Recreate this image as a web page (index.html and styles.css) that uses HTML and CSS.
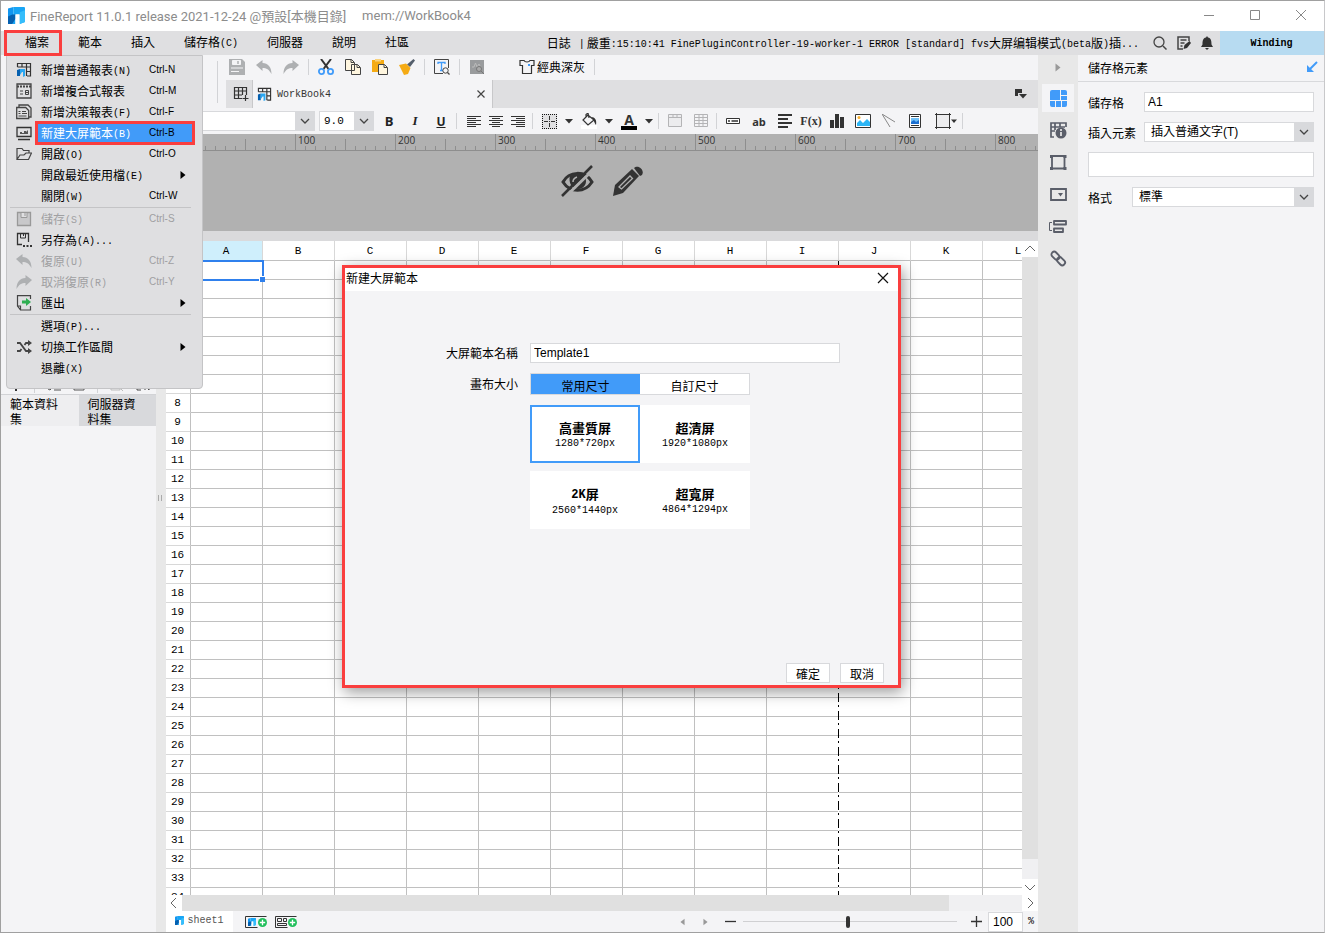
FILE: index.html
```html
<!DOCTYPE html>
<html lang="zh-Hant">
<head>
    <title>FineReport</title>
    <meta charset="UTF-8">
    <meta name="viewport" content="width=device-width, initial-scale=1.0">
    <link rel="stylesheet" href="styles.css">
</head>
<body>
    <!-- shared icons -->
    <svg class="defs">
        <symbol id="i-down" viewBox="0 0 10 10"><path d="M1 3l4 4 4-4" fill="none" stroke="#444" stroke-width="1.3"/></symbol>
        <symbol id="i-caret" viewBox="0 0 8 8"><path d="M0 2h8L4 6.500z" fill="#333"/></symbol>
        <symbol id="i-logo" viewBox="0 0 16 16"><path d="M0 1.500l5-1.500v8l-1 1v7H0z" fill="#1296f0"/><path d="M5 0h10a1 1 0 0 1 1 1v13l-5 2V7H7v9H4V8l1-1z" fill="#18a5f5"/><path d="M0 9l4-2h3v4l-3 5H0z" fill="#0560b0"/><path d="M7 7h4v9H7z" fill="#fff"/><path d="M11 5l5-2v11l-5 2z" fill="#35bdfb"/></symbol>
        <symbol id="i-book" viewBox="0 0 16 16"><path d="M1.500 5V1.500h13v12.500H11M6 5V1.500M10.500 1.500V14M1.500 5h13M10.500 9.500h4" fill="none" stroke="#333" stroke-width="1.200"/><path d="M1 8l3-1v7H1z" fill="#0560b0"/><path d="M4 7h5v7l-2 1v-5H6l-2 3z" fill="#2aa7f2"/></symbol>
        <symbol id="i-undo" viewBox="0 0 16 16"><path d="M0 6l6.500-5v3C12 4 15.500 8 15.500 15 13 10.500 10.500 9 6.500 9v3z" fill="#aeb0b2"/></symbol>
        <symbol id="i-redo" viewBox="0 0 16 16"><path d="M16 6L9.500 1v3C4 4 .5 8 .5 15 3 10.500 5.500 9 9.500 9v3z" fill="#aeb0b2"/></symbol>
        <symbol id="i-save" viewBox="0 0 16 16"><path d="M0 0h13l3 3v13H0z" fill="#aeb0b2"/><path d="M3.500 1.500h8v4h-8zM2 9h12M2 12.500h8" fill="#f4f4f6" stroke="#f4f4f6"/><path d="M9 2v3" stroke="#aeb0b2" stroke-width="1.500"/></symbol>
        <symbol id="i-right" viewBox="0 0 6 8"><path d="M.5 0l5 4-5 4z" fill="currentColor"/></symbol>
        <symbol id="i-plus" viewBox="0 0 10 10"><circle cx="5" cy="5" r="5" fill="#20bf5b"/><path d="M5 2v6M2 5h6" stroke="#fff" stroke-width="1.500"/></symbol>
    </svg>

    <div class="window">
        <header class="titlebar">
            <svg width="17" height="17"><use href="#i-logo"/></svg>
            <span>FineReport 11.0.1 release 2021-12-24 @預設[本機目錄]</span>
            <span class="path">mem://WorkBook4</span>
            <div class="win-buttons">
                <button aria-label="Minimize"><svg width="12" height="12"><path d="M1 6.500h10" stroke="#888"/></svg></button>
                <button aria-label="Maximize"><svg width="12" height="12"><path d="M1.500 1.500h9v9h-9z" fill="none" stroke="#888"/></svg></button>
                <button aria-label="Close"><svg width="12" height="12"><path d="M1 1l10 10M11 1L1 11" stroke="#888"/></svg></button>
            </div>
        </header>

        <nav class="menubar">
            <button class="marked">檔案</button>
            <button>範本</button>
            <button>插入</button>
            <button><span>儲存格<span class="lat">(C)</span></span></button>
            <button>伺服器</button>
            <button>說明</button>
            <button>社區</button>
            <div class="log">日誌<span class="lat bar">|</span>嚴重<span class="lat">:15:10:41 FinePluginController-19-worker-1 ERROR [standard] fvs</span>大屏编辑模式<span class="lat">(beta</span>版<span class="lat">)</span>插<span class="lat">...</span></div>
            <div class="menubar-icons">
                <svg width="14" height="14"><path d="M10 10l3.500 3.500" stroke="#444" stroke-width="1.500"/><circle cx="6" cy="6" r="5" fill="none" stroke="#444" stroke-width="1.300"/></svg>
                <svg width="14" height="14"><path d="M12 5V1H1v12h5M3.500 4h6M3.500 7h4M3.500 10h2" fill="none" stroke="#444" stroke-width="1.500"/><path d="M6.500 13l1-4 5-4 1.500 2-4 5z" fill="#333"/></svg>
                <svg width="12" height="14"><path d="M6 0l1 1.500c3 .8 3.500 3 3.500 7L12 11H0l1.500-2.500c0-4 .5-6.200 3.500-7zM4 12h4l-2 2z" fill="#333"/></svg>
            </div>
            <button class="user lat">Winding</button>
        </nav>

        <div class="main">
            <div class="editor">
                <div class="top">
                    <div class="top-left"></div>
                    <div class="top-right">
                        <div class="toolbar">
                            <button aria-label="Save"><svg width="16" height="16"><use href="#i-save"/></svg></button>
                            <button aria-label="Undo"><svg width="16" height="16"><use href="#i-undo"/></svg></button>
                            <button aria-label="Redo"><svg width="16" height="16"><use href="#i-redo"/></svg></button>
                            <i class="sep"></i>
                            <button aria-label="Cut"><svg width="16" height="16"><path d="M3 0l7.500 10M13 0L5.500 10" stroke="#333" stroke-width="2"/><circle cx="3.500" cy="12.500" r="2.600" fill="none" stroke="#419bf9" stroke-width="1.800"/><circle cx="12.500" cy="12.500" r="2.600" fill="none" stroke="#419bf9" stroke-width="1.800"/></svg></button>
                            <button aria-label="Copy"><svg width="16" height="16"><path d="M.5.5h6l3 3v8h-9zM6.500 5.500h6l3 3v7h-9z" fill="#fff6df" stroke="#444"/><path d="M6 .5v3h3M12 5.500v3h3" fill="none" stroke="#444"/></svg></button>
                            <button aria-label="Paste"><svg width="16" height="16"><path d="M0 1h12v12H0z" fill="#f5ab14"/><path d="M3 0h6v2.500H3z" fill="#f9d27c"/><path d="M6.500 5.500h6l3 3v7h-9z" fill="#fff6df" stroke="#444"/><path d="M12 5.500v3h3" fill="none" stroke="#444"/></svg></button>
                            <button aria-label="Format painter"><svg width="16" height="16"><path d="M14.500 0L16 1.500 11 8 8 5.500z" fill="#555f6c"/><path d="M0 6l7-1.500 4.500 4.500L9 15l-4 1z" fill="#f5ab14"/></svg></button>
                            <i class="sep"></i>
                            <button aria-label="Preview text"><svg width="16" height="16"><path d="M9 14.500H.5V.5h14V9" fill="none" stroke="#444"/><path d="M4 5V3.500h7V5M7.500 3.500v8M6 11.500h3" fill="none" stroke="#419bf9" stroke-width="1.300"/><circle cx="11.500" cy="11.500" r="2.700" fill="#f4f4f6" stroke="#444"/><path d="M13.500 13.500l2 2" stroke="#444" stroke-width="1.300"/></svg></button>
                            <i class="sep"></i>
                            <button aria-label="Monitor"><svg width="16" height="16"><path d="M1 1h14v14H1z" fill="#999b9d"/><path d="M3 8h2l1.500-4L8 8l2-3 1 2" fill="none" stroke="#bbb"/><circle cx="10" cy="10" r="2.500" fill="#aaa" stroke="#777"/><path d="M12 12l3 3" stroke="#777"/></svg></button>
                            <button class="theme"><svg width="16" height="16"><path d="M1 1.500h4c1 2 5 2 6 0h4v5h-2.500v8h-9v-8H1z" fill="none" stroke="#333" stroke-width="1.200"/><path d="M9 5h2v2H9z" fill="#419bf9"/></svg>經典深灰</button>
                            <i class="sep"></i>
                        </div>
                        <div class="tabs">
                            <button class="new-tab" aria-label="New"><svg width="16" height="16"><path d="M9 12.500H1.500V1.500h12V9M5.500 1.500v11M9.500 1.500V9M1.500 5h12M1.500 9H9M12.500 9v6M9.500 12.500h6" fill="none" stroke="#333" stroke-width="1.200"/></svg></button>
                            <div class="tab">
                                <svg width="15" height="15"><use href="#i-book"/></svg>
                                <span class="lat">WorkBook4</span>
                                <button aria-label="Close tab"><svg width="8" height="8"><path d="M.5.5l7 7M7.500.5l-7 7" stroke="#444" stroke-width="1.200"/></svg></button>
                            </div>
                            <button class="tab-list" aria-label="Tab list"><svg width="13" height="10"><path d="M1 0h7v4H4v3H1z" fill="#333"/><path d="M5 5h8L9 9.500z" fill="#333"/></svg></button>
                        </div>
                    </div>
                </div>

                <div class="body">
                    <aside class="sidebar">
                        <div class="file-tree"></div>
                        <div class="side-tools">
                            <svg width="12" height="14"><path d="M6 1v13M1 6h10" stroke="#333" stroke-width="2"/></svg>
                            <i class="sep"></i>
                            <svg width="14" height="14"><path d="M1 12l8-9 2 2-8 8zM7 13h7" fill="none" stroke="#555"/></svg>
                            <svg width="12" height="14"><path d="M1 4h10v9H1zM0 3h12" fill="none" stroke="#555"/></svg>
                            <i class="sep"></i>
                            <svg width="14" height="14"><path d="M1 2h9v11H1z" fill="none" stroke="#bbb"/><path d="M9 10l4 4" stroke="#bbb"/></svg>
                            <svg width="14" height="14"><path d="M5 13H1V2h10v3M9 13V8l4 5V8" fill="none" stroke="#444"/></svg>
                        </div>
                        <div class="data-tabs">
                            <button class="on">範本資料集</button>
                            <button>伺服器資料集</button>
                        </div>
                    </aside>
                    <div class="splitter"><svg width="4" height="6"><path d="M.5 0v6M3.500 0v6" stroke="#aaa"/></svg></div>

                    <div class="workspace">
                        <div class="format">
                            <label class="combo font-name"><select aria-label="Font"><option></option></select><span><svg width="10" height="10"><use href="#i-down"/></svg></span></label>
                            <label class="combo font-size"><select aria-label="Font size"><option>9.0</option></select><span><svg width="10" height="10"><use href="#i-down"/></svg></span></label>
                            <button class="b">B</button>
                            <button class="it">I</button>
                            <button class="u">U</button>
                            <i class="sep"></i>
                            <div class="aligns">
                                <button aria-label="Left"><svg width="14" height="14"><path d="M0 2.500h14M0 4.500h9M0 6.500h14M0 8.500h9M0 10.500h14M0 12.500h9" stroke="#333"/></svg></button>
                                <button aria-label="Center"><svg width="14" height="14"><path d="M0 2.500h14M3 4.500h8M0 6.500h14M3 8.500h8M0 10.500h14M3 12.500h8" stroke="#333"/></svg></button>
                                <button aria-label="Right"><svg width="14" height="14"><path d="M0 2.500h14M5 4.500h9M0 6.500h14M5 8.500h9M0 10.500h14M5 12.500h9" stroke="#333"/></svg></button>
                            </div>
                            <i class="sep"></i>
                            <button aria-label="Border"><svg width="15" height="15"><path d="M0 0h15v15H0z" fill="#e0e0e2"/><path d="M0 .5h15M0 14.500h15M.5 0v15M14.500 0v15" stroke="#111" stroke-dasharray="1 1"/><path d="M2 7.500h11M7.500 2v11" stroke="#333" stroke-dasharray="4 1 1 1"/></svg></button>
                            <button class="caret" aria-label="Border options"><svg width="8" height="8"><use href="#i-caret"/></svg></button>
                            <button aria-label="Fill"><svg width="16" height="16"><path d="M0 12h16v4H0z" fill="#fff"/><path d="M7 2L2 7l5 5 6-5zM5 5V1.500L7 0l1 5" fill="none" stroke="#333" stroke-width="1.200"/><path d="M10 4c4 0 6 3 5 8-2-3-2-5-5-8z" fill="#333"/></svg></button>
                            <button class="caret" aria-label="Fill options"><svg width="8" height="8"><use href="#i-caret"/></svg></button>
                            <button class="color" aria-label="Font color"><b>A</b></button>
                            <button class="caret" aria-label="Color options"><svg width="8" height="8"><use href="#i-caret"/></svg></button>
                            <i class="sep"></i>
                            <button aria-label="Merge"><svg width="14" height="14"><path d="M.5.500h13v12H.5zM.5 3.500h13M5 .5v3M9 .5v3" fill="#ececee" stroke="#b4b4b6"/></svg></button>
                            <button aria-label="Unmerge"><svg width="14" height="14"><path d="M.5.500h13v12H.5zM.5 3.500h13M.5 6.500h13M.5 9.500h13M5 .5v12M9 .5v12" fill="none" stroke="#b4b4b6"/></svg></button>
                            <i class="sep"></i>
                            <button aria-label="Widget"><svg width="14" height="6"><path d="M.5.500h13v5H.5z" fill="#fff" stroke="#333"/><path d="M2 3h2M5.500 3h6.500" stroke="#333" stroke-width="1.500"/></svg></button>
                            <button class="ab">ab</button>
                            <button aria-label="Rich text"><svg width="14" height="14"><path d="M0 1h14M0 5h10M0 9h14M0 13h10" stroke="#333" stroke-width="1.800"/></svg></button>
                            <button class="fx">F(x)</button>
                            <button aria-label="Chart"><svg width="14" height="14"><path d="M0 6h4v8H0zM5 0h4v14H5zM10 3h4v11h-4z" fill="#333"/></svg></button>
                            <button aria-label="Image"><svg width="16" height="14"><path d="M.5.500h15v13H.5z" fill="#fff" stroke="#333"/><path d="M2 12V9l3-3 3 3 4-4 3 3v4z" fill="#2cb5f5"/><circle cx="4" cy="3.500" r="1.500" fill="#f8b02c"/></svg></button>
                            <button aria-label="Slope line"><svg width="14" height="14"><path d="M0 0l13 8M0 0l8 13" stroke="#888" fill="none"/></svg></button>
                            <button aria-label="Sub report"><svg width="12" height="14"><path d="M.5.500h11v13H.5zM2 2.500h8M2 11.500h8" fill="#fff" stroke="#333"/><path d="M2 4h8v6H2z" fill="#6fc0f8"/><path d="M2 10V8l3-2 2 2 3-2v4z" fill="#1c6fd0"/></svg></button>
                            <button class="frame" aria-label="Frame"><svg width="16" height="16"><path d="M1.500 1.500h13v13h-13z" fill="#ececee" stroke="#333"/><path d="M0 1.500h16M0 14.500h16M1.500 0v16M14.500 0v16" stroke="#333"/></svg><svg width="6" height="6"><use href="#i-caret"/></svg></button>
                            <i class="sep"></i>
                        </div>

                        <div class="ruler"><span>100</span><span>200</span><span>300</span><span>400</span><span>500</span><span>600</span><span>700</span><span>800</span></div>

                        <div class="param-pane">
                            <svg width="34" height="34" viewBox="0 0 34 34"><path d="M2 18c6-11 22-12 29 0-7 11-22 11-29 0z" fill="none" stroke="#333" stroke-width="3"/><path d="M9 11c-2 8 2 14 8 14s10-6 7-12c-3-4-11-5-15-2z" fill="#333"/><path d="M12 18c0-3 1-4 4-5" fill="none" stroke="#b1b1b1" stroke-width="1.500"/><path d="M3 34L34 4" stroke="#b1b1b1" stroke-width="3"/><path d="M1 32L31 2" stroke="#333" stroke-width="2.500"/></svg>
                            <svg width="32" height="32" viewBox="0 0 32 32"><path d="M1 31l2-11L20 4l7 7-16 17z" fill="#333"/><path d="M7 22L18 11l2.500 2.500L9.500 24z" fill="#333" stroke="#b1b1b1" stroke-width="1.300"/><path d="M22 3c4-4 11 2 8 7l-2 1z" fill="#333"/></svg>
                        </div>

                        <div class="sheet-area">
                            <div class="sheet">
                                <table>
                                    <thead>
                                        <tr id="cols"><th></th></tr>
                                    </thead>
                                    <tbody id="rows"></tbody>
                                </table>
                                <div class="page-break"></div>
                            </div>
                            <div class="vscroll">
                                <button aria-label="Up"><svg width="10" height="10"><path d="M0 7l5-5 5 5" fill="none" stroke="#666"/></svg></button>
                                <div class="thumb"></div>
                                <button aria-label="Down"><svg width="10" height="10"><path d="M0 3l5 5 5-5" fill="none" stroke="#666"/></svg></button>
                            </div>
                        </div>
                        <div class="hscroll">
                            <button aria-label="Scroll left"><svg width="10" height="10"><path d="M7 0L2 5l5 5" fill="none" stroke="#666"/></svg></button>
                            <div class="thumb"></div>
                            <button aria-label="Scroll right"><svg width="10" height="10"><path d="M3 0l5 5-5 5" fill="none" stroke="#666"/></svg></button>
                        </div>
                        <footer class="status">
                            <button class="sheet-tab"><svg width="9" height="9"><use href="#i-logo"/></svg><span class="lat">sheet1</span></button>
                            <button class="add first" aria-label="Add sheet"><svg width="24" height="14"><path d="M.5 1.500h21M.5 1.500v11h12" fill="none" stroke="#333"/><use href="#i-logo" x="3" y="3" width="8" height="8"/><use href="#i-plus" x="13" y="3" width="9" height="9"/></svg></button>
                            <button class="add" aria-label="Add form"><svg width="24" height="14"><path d="M.5 1.500h21M.5 1.500v11h12M2.500 3.500h4v3h-4zM8.500 3.500h3v3h-3zM2.500 8.500h9v2h-9z" fill="none" stroke="#333"/><use href="#i-plus" x="13" y="3" width="9" height="9"/></svg></button>
                            <div class="zoom">
                                <button aria-label="Previous"><svg class="flip" width="5" height="8"><use href="#i-right"/></svg></button>
                                <button aria-label="Next"><svg width="5" height="8"><use href="#i-right"/></svg></button>
                                <button class="minus" aria-label="Zoom out"><svg width="11" height="11"><path d="M0 5.500h11" stroke="#333" stroke-width="1.300"/></svg></button>
                                <input type="range" aria-label="Zoom" min="0" max="100" value="49">
                                <button aria-label="Zoom in"><svg width="11" height="11"><path d="M0 5.500h11M5.500 0v11" stroke="#333" stroke-width="1.300"/></svg></button>
                                <input class="percent" id="percent" type="text" value="100">
                                <label class="lat" for="percent">%</label>
                            </div>
                        </footer>
                    </div>
                </div>
            </div>

            <div class="strip">
                <button class="fold" aria-label="Fold"><svg width="6" height="9"><use href="#i-right"/></svg></button>
                <button class="on" aria-label="Cell element"><svg width="17" height="17"><path d="M0 2a2 2 0 0 1 2-2h8v10H0zM11 0h4a2 2 0 0 1 2 2v3h-6zM11 6h6v4h-6zM0 11h5v6H2a2 2 0 0 1-2-2zM6 11h5v6H6zM12 11h5v4a2 2 0 0 1-2 2h-3z" fill="#419bf9"/></svg></button>
                <button aria-label="Cell attributes"><svg width="17" height="17"><path d="M4 15H1V1h15v4M1 5h14M5 1v7M10 1v4M1 9h4" fill="none" stroke="#5a5e69" stroke-width="1.700"/><circle cx="11" cy="11" r="5.500" fill="#5a5e69"/><path d="M11 7v2M11 10v4" stroke="#e8e8e8" stroke-width="1.700"/></svg></button>
                <button aria-label="Floating element"><svg width="17" height="17"><path d="M2 2h12.500v12.500H2z" fill="none" stroke="#5a5e69" stroke-width="1.800"/><path d="M0 1h3v3H0zM13.500 1h3v3h-3zM0 13h3v3H0zM13.500 13h3v3h-3z" fill="#5a5e69"/></svg></button>
                <button aria-label="Widget settings"><svg width="17" height="13"><path d="M1 1h15v11H1z" fill="none" stroke="#5a5e69" stroke-width="1.800"/><path d="M8 5h5l-2.500 3.500z" fill="#5a5e69"/></svg></button>
                <button aria-label="Condition attributes"><svg width="18" height="13"><path d="M3 2.500H.5v8H3" fill="none" stroke="#5a5e69"/><path d="M5 1h12v3.500H5zM5 8.500h9V12H5z" fill="none" stroke="#5a5e69" stroke-width="1.800" stroke-linejoin="round"/></svg></button>
                <button aria-label="Hyperlink"><svg width="17" height="17"><g fill="none" stroke="#5a5e69" stroke-width="1.900"><rect x="1" y="3" width="9" height="5.500" rx="2.700" transform="rotate(45 5.500 5.700)"/><rect x="6.500" y="8.500" width="9" height="5.500" rx="2.700" transform="rotate(45 11 11.300)"/></g></svg></button>
            </div>

            <aside class="props">
                <h2>儲存格元素<svg width="12" height="12"><path d="M11 1L4 8" stroke="#419bf9" stroke-width="2"/><path d="M1 4v7h7z" fill="#419bf9"/></svg></h2>
                <form>
                    <div class="row"><label for="cell">儲存格</label><input id="cell" type="text" value="A1"></div>
                    <div class="row"><label for="insert">插入元素</label><div class="combo"><select id="insert"><option>插入普通文字(T)</option></select><span><svg width="10" height="10"><use href="#i-down"/></svg></span></div></div>
                    <div class="row"><input class="value" type="text" aria-label="Value"></div>
                    <div class="row short"><label for="fmt">格式</label><div class="combo"><select id="fmt"><option>標準</option></select><span><svg width="10" height="10"><use href="#i-down"/></svg></span></div></div>
                </form>
            </aside>
        </div>

        <div class="file-menu" role="menu">
            <button><svg width="16" height="16"><use href="#i-book"/></svg><span>新增普通報表<span class="lat">(N)</span></span><kbd>Ctrl-N</kbd></button>
            <button><svg width="16" height="16"><path d="M1 1h14v14H1z" fill="none" stroke="#444" stroke-width="1.300"/><path d="M1 3.500h14" stroke="#444" stroke-dasharray="2 1" stroke-width="2"/><path d="M4 8h3M4 11h3M9.500 7.500h3v4h-3zM9.500 9.500h3" fill="none" stroke="#444"/></svg><span>新增複合式報表</span><kbd>Ctrl-M</kbd></button>
            <button><svg width="16" height="16"><path d="M3 3V1h9l3 3v9h-2M.7 3.500h9l3 3v8h-12z" fill="none" stroke="#444" stroke-width="1.300"/><path d="M2.500 7.500h2M6 7.500h4M2.500 9.500h2M6 9.500h5M2.500 12h8" stroke="#444"/></svg><span>新增決策報表<span class="lat">(F)</span></span><kbd>Ctrl-F</kbd></button>
            <button class="selected"><svg width="16" height="16"><path d="M1 2.500h14v9H1zM2 14.500h12" fill="none" stroke="#333" stroke-width="1.300"/><path d="M4 9V7h2v1h2V6h2v1l2-2v4z" fill="#555"/></svg><span>新建大屏範本<span class="lat">(B)</span></span><kbd>Ctrl-B</kbd></button>
            <button><svg width="16" height="16"><path d="M1 13V2.500h5l1.500 2H13V7M1 13.500h11.500L15.500 7H10L8 9H4z" fill="none" stroke="#444" stroke-width="1.200"/></svg><span>開啟<span class="lat">(O)</span></span><kbd>Ctrl-O</kbd></button>
            <button><i></i><span>開啟最近使用檔<span class="lat">(E)</span></span><svg class="more" width="6" height="8"><use href="#i-right"/></svg></button>
            <button><i></i><span>關閉<span class="lat">(W)</span></span><kbd>Ctrl-W</kbd></button>
            <hr>
            <button disabled><svg width="16" height="16"><path d="M1.500 1.500h13v13h-13z" fill="#c8c8ca" stroke="#999" stroke-width="1.300"/><path d="M5 1.500h6v5H5z" fill="#dfdfe1" stroke="#999"/><path d="M9 2v3" stroke="#999"/></svg><span>儲存<span class="lat">(S)</span></span><kbd>Ctrl-S</kbd></button>
            <button><svg width="16" height="16"><path d="M6 12.500H1.500v-11h11V10" fill="none" stroke="#333" stroke-width="1.300"/><path d="M4.500 2v4h5V2M7.500 2v2" fill="none" stroke="#333"/><path d="M7 13h2v2H7zM10.500 13h2v2h-2zM14 13h2v2h-2z" fill="#333"/></svg><span>另存為<span class="lat">(A)...</span></span></button>
            <button disabled><svg width="16" height="16"><use href="#i-undo"/></svg><span>復原<span class="lat">(U)</span></span><kbd>Ctrl-Z</kbd></button>
            <button disabled><svg width="16" height="16"><use href="#i-redo"/></svg><span>取消復原<span class="lat">(R)</span></span><kbd>Ctrl-Y</kbd></button>
            <button><svg width="16" height="16"><path d="M14.500 4V.7H1.500V11l3 4h10v-4M1.500 11h3v4" fill="none" stroke="#444" stroke-width="1.200"/><path d="M6 5.500h4V3l5 4-5 4V8.500H6z" fill="#2fae52"/></svg><span>匯出</span><svg class="more" width="6" height="8"><use href="#i-right"/></svg></button>
            <hr>
            <button><i></i><span>選項<span class="lat">(P)...</span></span></button>
            <button><svg width="16" height="16"><path d="M1 4h3l6 8h4M1 12h3l1.500-2M8.500 6L10 4h4" fill="none" stroke="#444" stroke-width="1.800"/><path d="M12 1l4 3-4 3zM12 9l4 3-4 3z" fill="#444"/></svg><span>切換工作區間</span><svg class="more" width="6" height="8"><use href="#i-right"/></svg></button>
            <button><i></i><span>退離<span class="lat">(X)</span></span></button>
        </div>

        <div class="dialog" role="dialog" aria-labelledby="dlg-title">
            <div class="dialog-title">
                <span id="dlg-title">新建大屏範本</span>
                <button aria-label="Close dialog"><svg width="12" height="12"><path d="M1 1l10 10M11 1L1 11" stroke="#111" stroke-width="1.200"/></svg></button>
            </div>
            <div class="dialog-body">
                <label for="tpl">大屏範本名稱</label>
                <input id="tpl" type="text" value="Template1">
                <span class="size-label">畫布大小</span>
                <div class="segments">
                    <button class="on">常用尺寸</button>
                    <button>自訂尺寸</button>
                </div>
                <div class="sizes">
                    <button class="on"><b>高畫質屏</b><span class="lat">1280*720px</span></button>
                    <button><b>超清屏</b><span class="lat">1920*1080px</span></button>
                    <button><b><span class="lat">2K</span>屏</b><span class="lat">2560*1440px</span></button>
                    <button><b>超寬屏</b><span class="lat">4864*1294px</span></button>
                </div>
            </div>
            <div class="dialog-buttons">
                <button>確定</button>
                <button>取消</button>
            </div>
        </div>
    </div>

    <script>
        const cols = document.getElementById('cols');
        const rows = document.getElementById('rows');
        const letters = 'ABCDEFGHIJKL';

        for (const letter of letters) {
            const th = document.createElement('th');
            th.textContent = letter;
            cols.appendChild(th);
        }
        cols.children[1].className = 'current';

        for (let i = 1; i <= 34; i++) {
            const tr = document.createElement('tr');
            tr.innerHTML = `<th>${i}</th>` + '<td></td>'.repeat(letters.length);
            rows.appendChild(tr);
        }
        rows.querySelector('td').className = 'current';
    </script>
</body>
</html>
```
FILE: styles.css
```css
* {
    box-sizing: border-box;
}
body {
    margin: 0;
    font-family: "Liberation Sans", "Noto Sans CJK TC", sans-serif;
    font-size: 12px;
    color: #000;
    background: #f4f4f6;
}
button, input, select {
    font: inherit;
    color: inherit;
    margin: 0;
    padding: 0;
    border: none;
    background: none;
    border-radius: 0;
    outline: none;
}
button {
    display: flex;
    align-items: center;
    justify-content: center;
}
svg {
    display: block;
    flex: none;
}
.defs {
    position: absolute;
    width: 0;
    height: 0;
}
.lat {
    font-family: "Liberation Mono", monospace;
    font-size: 10px;
    vertical-align: 1px;
}
.sep {
    flex: none;
    width: 1px;
    height: 16px;
    background: #d2d3d6;
}
.window {
    position: relative;
    display: flex;
    flex-direction: column;
    height: 100vh;
    border: 1px solid #a0a0a0;
    border-right-color: #c8c8ca;
    overflow: hidden;
}

/* title and menu bar */
.titlebar {
    flex: none;
    display: flex;
    align-items: center;
    height: 30px;
    padding-left: 7px;
    padding-bottom: 2px;
    background: #fff;
    color: #8c8c8c;
    font-family: Roboto, "Noto Sans CJK TC", sans-serif;
    font-size: 13px;
}
.titlebar span {
    margin-left: 5px;
}
.titlebar .path {
    margin-left: 16px;
}
.win-buttons {
    display: flex;
    margin-left: auto;
}
.win-buttons button {
    width: 46px;
    height: 28px;
}
.menubar {
    flex: none;
    display: flex;
    align-items: center;
    height: 24px;
    background: #dfdfe1;
}
.menubar > button {
    height: 24px;
    padding: 0 15px 3px 14px;
}
.menubar > .marked {
    height: 26px;
    margin-left: 3px;
    padding: 0 10px 3px 18px;
    border: 3px solid #fa3e3e;
    margin-right: 2px;
    z-index: 4;
}
.log {
    flex: none;
    margin-left: auto;
    padding-bottom: 2px;
    white-space: nowrap;
}
.log .bar {
    margin: 0 2px 0 8px;
}
.menubar-icons {
    display: flex;
    gap: 10px;
    align-items: center;
    margin: 0 7px 0 14px;
}
.menubar > .user {
    width: 104px;
    padding-bottom: 0;
    background: #b7dbf1;
    font-weight: bold;
}

.main {
    flex: 1;
    display: flex;
    min-height: 0;
}
.editor {
    flex: 1;
    display: flex;
    flex-direction: column;
    min-width: 0;
}

/* toolbar and tabs */
.top {
    flex: none;
    display: flex;
    height: 53px;
}
.top-left {
    flex: none;
    width: 217px;
    margin: 6px 8px 5px 0;
    border-right: 1px solid #d2d3d6;
}
.top-right {
    flex: 1;
    min-width: 0;
}
.toolbar {
    display: flex;
    align-items: center;
    gap: 11px;
    height: 25px;
    padding-left: 3px;
    padding-bottom: 2px;
}
.toolbar .sep {
    margin: 0 -2px;
}
.toolbar .theme {
    gap: 2px;
    margin-left: 23px;
}
.tabs {
    display: flex;
    align-items: center;
    height: 28px;
    background: #dfdfe1;
}
.new-tab {
    width: 27px;
    padding-left: 4px;
    height: 28px;
    border-right: 1px solid #c8c8ca;
}
.tab {
    display: flex;
    align-items: center;
    width: 240px;
    height: 28px;
    padding: 0 7px 0 4px;
    gap: 5px;
    background: #f4f4f6;
    border-right: 1px solid #c8c8ca;
    color: #333;
}
.tab button {
    margin-left: auto;
}
.tab-list {
    margin-left: auto;
    margin-right: 11px;
}

.body {
    flex: 1;
    display: flex;
    min-height: 0;
}

/* left panel */
.sidebar {
    flex: none;
    display: flex;
    flex-direction: column;
    width: 155px;
}
.file-tree {
    height: 266px;
}
.side-tools {
    display: flex;
    gap: 12px;
    height: 21px;
    padding: 3px 9px 0;
    border-bottom: 1px solid #d2d3d6;
}
.data-tabs {
    display: flex;
}
.data-tabs button {
    flex: 1;
    height: 31px;
    padding: 3px 20px 0 9px;
    text-align: left;
    align-items: flex-start;
    line-height: 15px;
    background: #d8d9dc;
}
.data-tabs .on {
    background: #eeeef0;
}
.splitter {
    flex: none;
    display: flex;
    align-items: center;
    justify-content: center;
    width: 10px;
    padding-right: 2px;
    padding-bottom: 44px;
    background: #e8e8e8;
}

/* format bar */
.workspace {
    flex: 1;
    display: flex;
    flex-direction: column;
    min-width: 0;
}
.format {
    flex: none;
    display: flex;
    align-items: center;
    height: 26px;
}
.format > button {
    flex: none;
    width: 26px;
    height: 22px;
}
.format > .caret {
    width: 14px;
}
.format .sep {
    margin: 0 3px 0 2px;
}
.combo {
    flex: 1;
    display: flex;
    height: 20px;
    background: #fff;
    border: 1px solid #d8d9dc;
}
.combo select {
    flex: 1;
    min-width: 0;
    padding-left: 6px;
    appearance: none;
}
.combo span {
    flex: none;
    display: flex;
    align-items: center;
    justify-content: center;
    width: 19px;
    background: #d8d9dc;
}
.font-name {
    flex: none;
    width: 149px;
    margin-right: 4px;
}
.font-size {
    flex: none;
    width: 55px;
    margin-right: 2px;
}
.font-size select {
    padding-left: 4px;
    font-family: "Liberation Mono", monospace;
    font-size: 11px;
}
.format .b {
    font: bold 13px "Open Sans", sans-serif;
    color: #222;
}
.format .it {
    font: italic bold 13px "Liberation Serif", serif;
    color: #222;
}
.format .u {
    font: bold 12px "Open Sans", sans-serif;
    text-decoration: underline;
    color: #222;
}
.aligns {
    display: flex;
    padding: 0 1px 0 3px;
}
.aligns button {
    width: 22px;
}
.color b {
    width: 16px;
    border-bottom: 4px solid #000;
    font: bold 14px/13px "Open Sans", sans-serif;
    color: #333;
}
.format .ab {
    font: bold 11px "Open Sans", sans-serif;
    color: #333;
}
.format .fx {
    font: bold 12px "Liberation Serif", serif;
    color: #333;
}
.format .frame {
    width: 32px;
    padding-left: 4px;
}

/* ruler: ticks every 10, 50 and 100 */
.ruler {
    flex: none;
    display: flex;
    height: 17px;
    padding-left: 129px;
    overflow: hidden;
    border-bottom: 1px solid #8e8e8e;
    background:
        linear-gradient(90deg, #8e8e8e 1px, transparent 1px) 29px 0 / 100px 16px repeat-x,
        linear-gradient(90deg, #8e8e8e 1px, transparent 1px) 29px 5px / 50px 11px repeat-x,
        linear-gradient(90deg, #8e8e8e 1px, transparent 1px) 29px 12px / 10px 4px repeat-x,
        #b1b1b1;
}
.ruler span {
    flex: none;
    width: 100px;
    padding-left: 3px;
    font: 10px/13px "Open Sans", sans-serif;
    color: #333;
}
.param-pane {
    flex: none;
    display: flex;
    align-items: center;
    justify-content: center;
    gap: 17px;
    height: 80px;
    padding-bottom: 20px;
    background: #b1b1b1;
}

/* sheet */
.sheet-area {
    flex: 1;
    display: flex;
    min-height: 0;
    border-top: 10px solid #dadadc;
}
.sheet {
    position: relative;
    flex: 1;
    min-width: 0;
    overflow: hidden;
    background: #fff;
}
.sheet table {
    width: 889px;
    table-layout: fixed;
    border-collapse: separate;
    border-spacing: 0;
}
.sheet th, .sheet td {
    height: 19px;
    padding: 0;
    border-right: 1px solid #c0c0c0;
    border-bottom: 1px solid #c0c0c0;
}
.sheet th {
    padding-right: 1px;
    font: 11px/18px "Liberation Mono", monospace;
    border-color: #d8d8d8;
}
.sheet thead th {
    height: 20px;
    padding-top: 1px;
    border-bottom-color: #c0c0c0;
}
.sheet th:first-child {
    width: 25px;
    border-right-color: #c0c0c0;
}
.sheet th.current {
    background: #cfeffc;
}
.sheet td.current {
    position: relative;
    outline: 2px solid #2f80ed;
    outline-offset: -1px;
}
.sheet td.current::after {
    content: "";
    position: absolute;
    right: -3px;
    bottom: -3px;
    width: 5px;
    height: 5px;
    background: #2f80ed;
    border: 1px solid #fff;
    box-sizing: content-box;
    border-right: none;
    border-bottom: none;
}
.page-break {
    position: absolute;
    left: 672px;
    top: 20px;
    bottom: 0;
    width: 1px;
    background: repeating-linear-gradient(#000 0 9px, #fff 9px 12px, #000 12px 14px, #fff 14px 18px);
}
.vscroll, .hscroll {
    flex: none;
    display: flex;
    background: #f0f0f2;
}
.vscroll {
    flex-direction: column;
    width: 16px;
}
.vscroll button, .hscroll button {
    flex: none;
    width: 16px;
    height: 16px;
    background: #fff;
}
.vscroll .thumb, .hscroll .thumb {
    background: #e0e0e0;
}
.vscroll .thumb {
    height: 92%;
}
.hscroll .thumb {
    width: 88%;
}
.vscroll button:last-child {
    margin-top: auto;
}
.hscroll button:last-child {
    margin-left: auto;
}

/* status bar */
.status {
    flex: none;
    display: flex;
    align-items: center;
    height: 21px;
}
.sheet-tab {
    gap: 3px;
    width: 67px;
    height: 21px;
    padding-bottom: 2px;
    background: #fff;
    color: #555;
}
.add {
    margin-left: 6px;
}
.add.first {
    margin-left: 12px;
}
.zoom {
    display: flex;
    align-items: center;
    margin-left: auto;
    color: #999;
}
.zoom button {
    width: 11px;
    margin-right: 12px;
}
.zoom .minus {
    margin: 0 7px 0 2px;
}
.flip {
    transform: scaleX(-1);
}
.zoom input[type="range"] {
    width: 214px;
    height: 16px;
    margin-right: 14px;
    appearance: none;
}
.zoom input[type="range"]::-webkit-slider-runnable-track {
    height: 1px;
    background: #d0d0d2;
}
.zoom input[type="range"]::-webkit-slider-thumb {
    appearance: none;
    width: 4px;
    height: 12px;
    margin-top: -5px;
    border-radius: 2px;
    background: #333;
}
.zoom input[type="range"] + button {
    margin-right: 6px;
}
.percent {
    width: 35px;
    height: 20px;
    padding-left: 4px;
    border: 1px solid #d8d9dc;
    background: #fff;
    color: #000;
    font-size: 12px;
}
.zoom label {
    margin: 0 4px 0 5px;
    color: #000;
}

/* right strip */
.strip {
    flex: none;
    display: flex;
    flex-direction: column;
    align-items: center;
    gap: 4px;
    width: 40px;
    background: #e8e8e8;
}
.strip button {
    width: 32px;
    height: 28px;
}
.strip .fold {
    height: 25px;
    color: #999;
}
.strip .on {
    background: #f4f4f6;
}

/* cell properties */
.props {
    flex: none;
    width: 246px;
}
.props h2 {
    display: flex;
    align-items: center;
    justify-content: space-between;
    height: 27px;
    margin: 0;
    padding: 0 6px 2px 10px;
    border-bottom: 1px solid #d8d9dc;
    font-size: 12px;
    font-weight: normal;
}
.props form {
    display: flex;
    flex-direction: column;
    gap: 10px;
    padding: 10px 10px 0;
}
.row {
    display: flex;
    align-items: center;
}
.row label {
    width: 56px;
}
.row.short label {
    width: 44px;
}
.row input {
    flex: 1;
    min-width: 0;
    height: 20px;
    padding-left: 3px;
    border: 1px solid #d8d9dc;
    background: #fff;
}
.row .value {
    height: 25px;
}

/* file menu */
.file-menu {
    position: absolute;
    left: 5px;
    top: 54px;
    width: 197px;
    padding: 3px 11px 10px 9px;
    background: #dfdfe1;
    border: 1px solid #c4c4c6;
    border-radius: 0 0 4px 4px;
    z-index: 3;
}
.file-menu button {
    display: grid;
    grid-template-columns: 16px 108px 1fr;
    column-gap: 9px;
    justify-content: start;
    justify-items: start;
    width: 100%;
    height: 21px;
    text-align: left;
    white-space: nowrap;
}
.file-menu button[disabled] {
    color: #a0a0a2;
}
.file-menu kbd {
    font-family: "Liberation Sans", sans-serif;
    font-size: 10px;
    margin-left: -9px;
}
.file-menu .more {
    justify-self: end;
    margin-right: 5px;
}
.file-menu hr {
    height: 1px;
    margin: 1px 0 0 -6px;
    border: none;
    background: #c4c4c6;
}
.file-menu .selected {
    position: relative;
    color: #fff;
}
.file-menu .selected::before {
    content: "";
    position: absolute;
    left: 19px;
    right: -4px;
    top: -1px;
    bottom: -2px;
    background: #419bf9;
    border: 3px solid #fa3e3e;
    z-index: -1;
}
.file-menu .selected kbd {
    color: #000;
}

/* dialog */
.dialog {
    position: absolute;
    left: 341px;
    top: 264px;
    display: flex;
    flex-direction: column;
    width: 559px;
    height: 423px;
    background: #f4f4f6;
    border: 3px solid #fa3e3e;
    box-shadow: 2px 4px 14px rgba(0,0,0,0.4);
    z-index: 2;
}
.dialog-title {
    display: flex;
    justify-content: space-between;
    align-items: center;
    height: 23px;
    padding: 0 9px 4px 1px;
    background: #fff;
}
.dialog-body {
    flex: 1;
    display: grid;
    grid-template-columns: 173px 310px;
    grid-template-rows: 20px 22px auto;
    gap: 10px 12px;
    align-content: start;
    align-items: center;
    padding-top: 52px;
}
.dialog-body label, .size-label {
    padding-bottom: 2px;
    text-align: right;
}
.dialog-body input {
    height: 20px;
    padding-left: 3px;
    border: 1px solid #d8d9dc;
    background: #fff;
}
.segments {
    display: flex;
    width: 220px;
    height: 22px;
    border: 1px solid #d8d9dc;
}
.segments button {
    flex: 1;
    padding-top: 3px;
    background: #fff;
}
.segments .on {
    background: #419bf9;
}
.sizes {
    grid-column: 2;
    display: grid;
    grid-template-columns: 110px 110px;
    row-gap: 8px;
}
.sizes button {
    flex-direction: column;
    height: 58px;
    padding-top: 4px;
    background: #fff;
    line-height: 15px;
}
.sizes b {
    font-size: 13px;
}
.sizes b .lat {
    font-size: 12px;
}
.sizes .on {
    border: 2px solid #419bf9;
}
.dialog-buttons {
    display: flex;
    justify-content: flex-end;
    gap: 10px;
    padding: 0 14px 2px;
}
.dialog-buttons button {
    width: 44px;
    height: 20px;
    border: 1px solid #d8d9dc;
    background: #fff;
}
```
